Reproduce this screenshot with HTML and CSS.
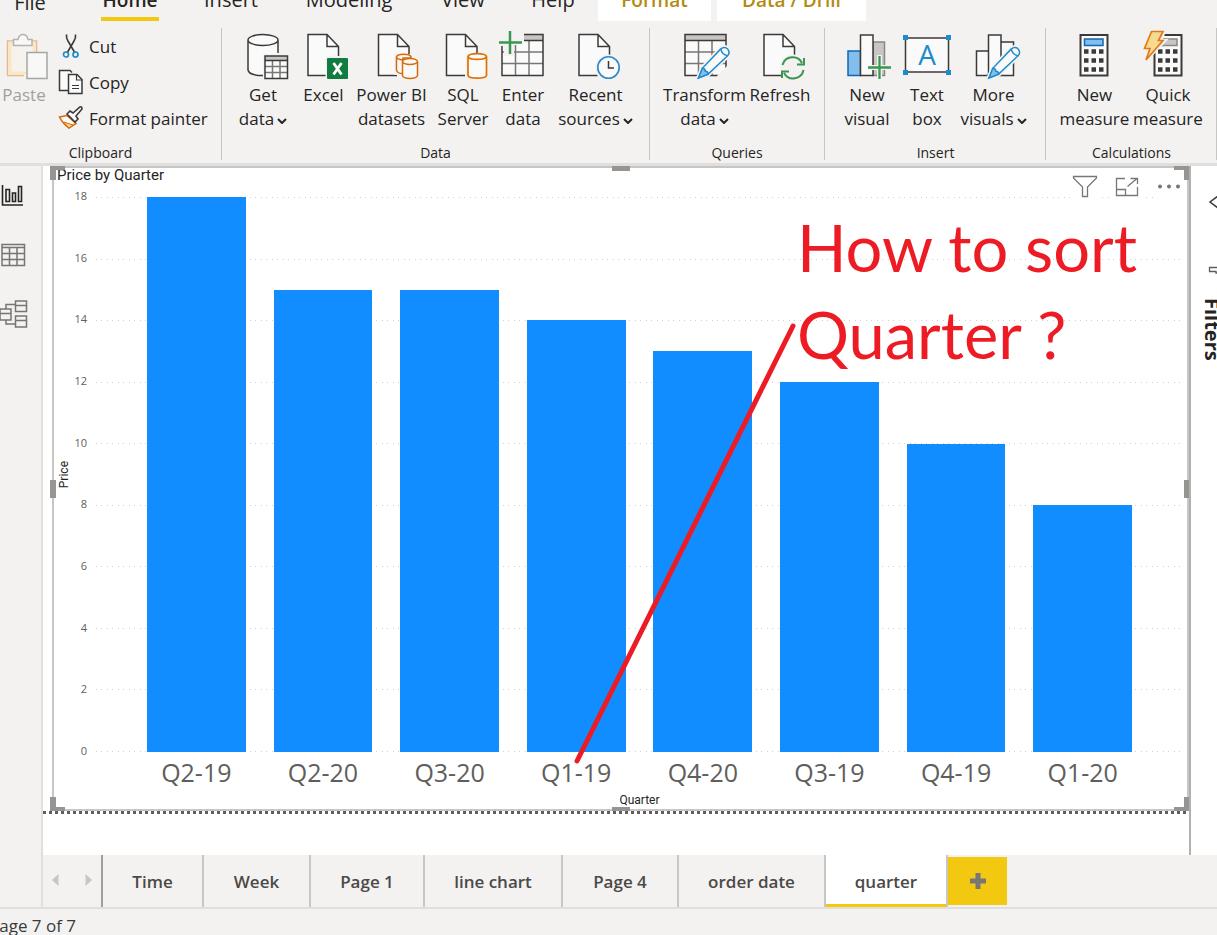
FILE: index.html
```html
<!DOCTYPE html>
<html lang="en">
<head>
<meta charset="utf-8">
<title>Price by Quarter</title>
<link rel="stylesheet" href="styles.css">
</head>
<body>
<svg class="defs" aria-hidden="true">
  <symbol id="doc" viewBox="-1 -1 34 44" overflow="visible">
    <path d="M0.5 0.5H19.5L31 12V41.500H0.500Z" fill="#fafafa"/>
    <path d="M31 22V12.500L19.500 .5H.5V41.500H19M19.500 .5V12.500H31" fill="none" stroke="#3b3a39" stroke-width="1.5"/>
  </symbol>
  <symbol id="pencil" viewBox="0 0 34 34" overflow="visible">
    <path d="M1 33L5 23L24 3Q28 0 31 3Q34 7 31 10L11 29Z" fill="#fff" stroke="#f3f2f1" stroke-width="5"/>
    <path d="M1 33L5 23L24 3Q28 0 31 3Q34 7 31 10L11 29Z" fill="#fafafa" stroke="#1e8bcd" stroke-width="1.500"/>
    <path d="M1 33L5 23Q8 23 8 26Q11 26 11 29Z" fill="#83beec" stroke="#1e8bcd" stroke-width="1.500"/>
    <path d="M24 3Q25 9 31 10" fill="none" stroke="#1e8bcd" stroke-width="1.500"/>
  </symbol>
  <symbol id="grid" viewBox="0 0 43 43" overflow="visible">
    <rect x="1" y="1" width="41" height="41" fill="#fafafa"/>
    <rect x="1" y="1" width="41" height="6" fill="#c8c6c4"/>
    <path d="M14.500 7V42M28 7V42M1 18.500H42M1 30H42" stroke="#797775" stroke-width="1.500" fill="none"/>
    <path d="M1 7H42M1 1H42V42H1Z" stroke="#3b3a39" stroke-width="1.500" fill="none"/>
  </symbol>
  <symbol id="chev" viewBox="0 0 10 6" overflow="visible">
    <path d="M1 1L5 5L9 1" fill="none" stroke="#252423" stroke-width="2"/>
  </symbol>
</svg>

<div class="app">
  <nav class="menu">
    <button class="menu-item file">File</button>
    <button class="menu-item active">Home</button>
    <button class="menu-item">Insert</button>
    <button class="menu-item">Modeling</button>
    <button class="menu-item">View</button>
    <button class="menu-item help">Help</button>
    <button class="menu-item context">Format</button>
    <button class="menu-item context">Data / Drill</button>
  </nav>

  <div class="ribbon">
    <section class="group clipboard">
      <div class="tools">
        <button class="tool paste">
          <svg class="icon" viewBox="0 0 56 50">
            <path d="M12 12H39V46H12Z" fill="#f6f3ef"/>
            <path d="M19 11H11.500V45.500H28M35 11H40.500V22" fill="none" stroke="#e5b98f" stroke-width="1.500"/>
            <path d="M19 13H14V43H30M35 13H38V22" fill="none" stroke="#fbe6c4" stroke-width="3"/>
            <path d="M17.500 15.500V9.500H22Q23 4.500 27 4.500T32 9.500H36V15.500Z" fill="#f8f8f7" stroke="#b5b3b1" stroke-width="1.500"/>
            <rect x="31" y="22.500" width="20" height="26" fill="#f8f8f7" stroke="#a8a6a4" stroke-width="1.500"/>
          </svg>
          <span>Paste</span>
        </button>
        <div class="stack">
          <button class="row-tool">
            <svg class="mini" viewBox="0 0 26 26"><path d="M8.500 1.500Q8 5 10 8L17 20M17.500 1.500Q18 5 16 8L9 20" fill="none" stroke="#3b3a39" stroke-width="1.600"/><circle cx="8" cy="21.500" r="2.500" fill="none" stroke="#1e8bcd" stroke-width="1.700"/><circle cx="17.500" cy="21.500" r="2.500" fill="none" stroke="#1e8bcd" stroke-width="1.700"/></svg>
            <span>Cut</span>
          </button>
          <button class="row-tool">
            <svg class="mini" viewBox="0 0 26 26"><path d="M10.500 21.500H1.500V1.500H12L14 3.500" fill="#fafafa" stroke="#3b3a39" stroke-width="1.500"/><path d="M10.500 5.500H19L24 10.500V24.500H10.500Z" fill="#fafafa" stroke="#3b3a39" stroke-width="1.500"/><path d="M18.500 5.500V11H24M14 16.500H21M14 19.500H21" fill="none" stroke="#3b3a39" stroke-width="1.200"/></svg>
            <span>Copy</span>
          </button>
          <button class="row-tool">
            <svg class="mini" viewBox="0 0 26 26"><path d="M1.500 12L9 10.500L18 18.500L11 23Q5 19 1.500 12Z" fill="#fafafa" stroke="#d86a0a" stroke-width="1.600"/><path d="M5.500 17L15 20L11 23Z" fill="#f9d58d" stroke="#d86a0a"/><path d="M9 9L12 6L15 8L22 2Q24 1 24 4L18 11L20 14L17 17Z" fill="#fafafa" stroke="#3b3a39" stroke-width="1.600"/></svg>
            <span>Format painter</span>
          </button>
        </div>
      </div>
      <h2 class="group-name">Clipboard</h2>
    </section>

    <section class="group data">
      <div class="tools">
        <button class="tool">
          <svg class="icon" viewBox="0 0 56 50">
            <path d="M13 10V41Q14 46 28 46H30V26H43V10Q43 5 28 5T13 10Z" fill="#fafafa"/>
            <path d="M43 23V10M13 10V40Q14 45.500 28 45.500M13 10A15 5.500 0 0 0 43 10A15 5.500 0 0 0 13 10Z" fill="none" stroke="#3b3a39" stroke-width="1.500"/>
            <rect x="28" y="24" width="26" height="26" fill="#f3f2f1"/>
            <rect x="30" y="26" width="22.500" height="22.500" fill="#fafafa"/><rect x="30" y="26" width="22.500" height="4" fill="#c8c6c4"/>
            <path d="M37.500 30.500V48.500M45 30.500V48.500M30 36.500H52.500M30 42.500H52.500" stroke="#797775" stroke-width="1.500"/>
            <path d="M30 26H52.500V48.500H30ZM30 30.500H52.500" fill="none" stroke="#3b3a39" stroke-width="1.500"/>
          </svg>
          <span>Get<br>data<svg class="chev"><use href="#chev"/></svg></span>
        </button>
        <button class="tool">
          <svg class="icon" viewBox="0 0 56 50"><use href="#doc" x="10.500" y="3" width="34" height="44"/><rect x="29.500" y="26" width="24" height="24" fill="#f3f2f1"/><rect x="31" y="28" width="21" height="21" rx="1" fill="#107c41"/><path d="M37.500 33L45.500 44.500M45.500 33L37.500 44.500" stroke="#fff" stroke-width="2.800"/></svg>
          <span>Excel</span>
        </button>
        <button class="tool">
          <svg class="icon" viewBox="0 0 56 50"><use href="#doc" x="13" y="3" width="34" height="44"/>
            <path d="M30 24H48V27H56V50H36V45H30Z" fill="#f3f2f1"/>
            <g fill="#fafafa" stroke="#d86a0a" stroke-width="1.500"><path d="M32.500 27V40Q33 43.500 39 43.500V28H47V27A7.300 3 0 0 0 32.500 27A7.300 3 0 0 0 40 30"/><path d="M38.500 31.500V45.500A7.500 3 0 0 0 53.500 45.500V31.500A7.500 3 0 0 0 38.500 31.500A7.500 3 0 0 0 53.500 31.500"/></g>
          </svg>
          <span>Power BI<br>datasets</span>
        </button>
        <button class="tool">
          <svg class="icon" viewBox="0 0 56 50"><use href="#doc" x="10" y="3" width="34" height="44"/><path d="M30.500 23H54V50H30.500Z" fill="#f3f2f1"/><path d="M33 26.500V45.500A9.300 3 0 0 0 51.500 45.500V26.500A9.300 3.300 0 0 0 33 26.500A9.300 3.300 0 0 0 51.500 26.500" fill="#fafafa" stroke="#e07000" stroke-width="1.700"/></svg>
          <span>SQL<br>Server</span>
        </button>
        <button class="tool">
          <svg class="icon" viewBox="0 0 56 50"><use href="#grid" x="6" y="3.500" width="43" height="43"/><path d="M3 0H20V3H29V12H19V26H9V16H3Z" fill="#f3f2f1"/><path d="M19 12H29V15H19Z" fill="#fafafa"/><path d="M15 1V24M4 12.500H27" stroke="#3a9650" stroke-width="2.500"/></svg>
          <span>Enter<br>data</span>
        </button>
        <button class="tool">
          <svg class="icon" viewBox="0 0 56 50"><use href="#doc" x="9.500" y="3" width="34" height="44"/><circle cx="40.500" cy="37.500" r="13" fill="#f3f2f1"/><circle cx="40.500" cy="37.500" r="10.700" fill="#fafafa" stroke="#2b88c9" stroke-width="1.600"/><path d="M40.500 31V38H46" fill="none" stroke="#3b3a39" stroke-width="1.500"/></svg>
          <span>Recent<br>sources<svg class="chev"><use href="#chev"/></svg></span>
        </button>
      </div>
      <h2 class="group-name">Data</h2>
    </section>

    <section class="group queries">
      <div class="tools">
        <button class="tool">
          <svg class="icon" viewBox="0 0 56 50"><use href="#grid" x="7" y="3.500" width="43" height="43"/><path d="M40 46L52 34V50H40Z" fill="#f3f2f1"/><use href="#pencil" x="20.500" y="16" width="33" height="33"/></svg>
          <span>Transform<br>data<svg class="chev"><use href="#chev"/></svg></span>
        </button>
        <button class="tool">
          <svg class="icon" viewBox="0 0 56 50"><use href="#doc" x="10.500" y="3" width="34" height="44"/><circle cx="41" cy="37.500" r="13" fill="#f3f2f1"/><path d="M30.500 35A10.500 10.500 0 0 1 50 33M51.500 40A10.500 10.500 0 0 1 32 43M52 28V34.500H45M30 48V41.500H37" fill="none" stroke="#3a9650" stroke-width="2"/></svg>
          <span>Refresh</span>
        </button>
      </div>
      <h2 class="group-name">Queries</h2>
    </section>

    <section class="group insert">
      <div class="tools">
        <button class="tool">
          <svg class="icon" viewBox="0 0 56 50"><rect x="9" y="21" width="12.500" height="24.500" fill="#83beec" stroke="#1167b1" stroke-width="1.500"/><rect x="34" y="12" width="11.500" height="33.500" fill="#c8c6c4" stroke="#8a8886" stroke-width="1.500"/><rect x="21.500" y="5" width="12.500" height="40.500" fill="#fafafa" stroke="#3b3a39" stroke-width="1.500"/><path d="M38 25H43V35H54V40H43V50H38V40H29V35H38Z" fill="#f3f2f1"/><path d="M40.500 26V49M29 37.500H52" stroke="#3a9650" stroke-width="2.300"/></svg>
          <span>New<br>visual</span>
        </button>
        <button class="tool">
          <svg class="icon" viewBox="0 0 56 50"><rect x="6.500" y="8" width="43" height="34" fill="#fafafa" stroke="#3b3a39" stroke-width="1.500"/><path d="M4 5H9V10H4ZM47 5H52V10H47ZM4 40H9V45H4ZM47 40H52V45H47Z" fill="#1e8bcd"/><text x="28" y="35" class="glyph-a">A</text></svg>
          <span>Text<br>box</span>
        </button>
        <button class="tool">
          <svg class="icon" viewBox="0 0 56 50"><path d="M10.500 21H22.500V45.500H10.500ZM35 12H47.500V45.500H35ZM22.500 5H35V45.500H22.500Z" fill="#fafafa" stroke="#3b3a39" stroke-width="1.500"/><use href="#pencil" x="22" y="16" width="33" height="33"/></svg>
          <span>More<br>visuals<svg class="chev"><use href="#chev"/></svg></span>
        </button>
      </div>
      <h2 class="group-name">Insert</h2>
    </section>

    <section class="group calc">
      <div class="tools">
        <button class="tool">
          <svg class="icon" viewBox="0 0 56 50"><rect x="13.500" y="5" width="27" height="40.500" fill="#fafafa" stroke="#3b3a39" stroke-width="2"/><rect x="17.500" y="9" width="18.500" height="6.500" fill="#83beec" stroke="#1167b1" stroke-width="1.500"/><path d="M17 21.500H36.500M17 30.500H36.500M17 39.500H36.500" stroke="#3b3a39" stroke-width="4.500" stroke-dasharray="4.500 3"/></svg>
          <span>New<br>measure</span>
        </button>
        <button class="tool">
          <svg class="icon" viewBox="0 0 56 50"><rect x="14.500" y="5" width="27" height="40.500" fill="#fafafa" stroke="#3b3a39" stroke-width="2"/><rect x="18.500" y="9" width="18.500" height="6.500" fill="#c8c6c4" stroke="#8a8886" stroke-width="1.500"/><path d="M18 21.500H37.500M18 30.500H37.500M18 39.500H37.500" stroke="#3b3a39" stroke-width="4.500" stroke-dasharray="4.500 3"/><path d="M11 1H24L20 11H24L5.500 30L9 19H5Z" fill="#f3f2f1" stroke="#f3f2f1" stroke-width="4"/><path d="M11.500 1.500H23L18.500 10.500H23L6 30L10 18.500H4.500Z" fill="#f9d98f" stroke="#e07b1a" stroke-width="1.700"/></svg>
          <span>Quick<br>measure</span>
        </button>
      </div>
      <h2 class="group-name">Calculations</h2>
    </section>
  </div>

  <div class="workspace">
    <nav class="views">
      <button class="view" aria-label="Report view"><svg viewBox="0 0 30 30"><path d="M2.500 4V24H23" fill="none" stroke="#252423" stroke-width="1.600"/><path d="M6 8.500H9.500V20.500H6ZM12.500 12H15.500V20.500H12.500ZM18.500 5.500H21.500V20.500H18.500Z" fill="none" stroke="#252423" stroke-width="1.600"/></svg></button>
      <button class="view" aria-label="Data view"><svg viewBox="0 0 30 30"><path d="M2 4.500H24.500V25.500H2ZM2 7.500H24.500M2 13.500H24.500M2 19.500H24.500M9.500 7.500V25.500M17 7.500V25.500" fill="none" stroke="#777573" stroke-width="1.500"/></svg></button>
      <button class="view" aria-label="Model view"><svg viewBox="0 0 30 30"><path d="M0 10H11V21H0ZM0 14.500H11M15.500 2H26.500V12.500H15.500ZM15.500 6.500H26.500M15.500 17H26.500V28H15.500ZM15.500 21.500H26.500M6 10V5.500H15.500M6 21V25H15.500" fill="none" stroke="#777573" stroke-width="1.500"/></svg></button>
    </nav>

    <div class="center">
      <main class="canvas">
        <figure class="visual">
          <figcaption class="visual-title">Price by Quarter</figcaption>
          <div class="chart">
            <div class="y-title"><span>Price</span></div>
            <div class="y-axis"><span>18</span><span>16</span><span>14</span><span>12</span><span>10</span><span>8</span><span>6</span><span>4</span><span>2</span><span>0</span></div>
            <div class="plot">
              <div class="lines"><i></i><i></i><i></i><i></i><i></i><i></i><i></i><i></i><i></i><i></i></div>
              <div class="bars">
                <div class="bar" style="height:100%"></div>
                <div class="bar" style="height:83.33%"></div>
                <div class="bar" style="height:83.33%"></div>
                <div class="bar" style="height:77.78%"></div>
                <div class="bar" style="height:72.22%"></div>
                <div class="bar" style="height:66.67%"></div>
                <div class="bar" style="height:55.56%"></div>
                <div class="bar" style="height:44.44%"></div>
              </div>
            </div>
            <div class="x-axis"><span>Q2-19</span><span>Q2-20</span><span>Q3-20</span><span>Q1-19</span><span>Q4-20</span><span>Q3-19</span><span>Q4-19</span><span>Q1-20</span></div>
          </div>
          <div class="x-title">Quarter</div>

          <div class="visual-tools">
            <button aria-label="Filters"><svg viewBox="0 0 30 30"><path d="M3.500 4.500H26.500V6L17.500 15V24.500H12.500V15L3.500 6Z" fill="none" stroke="#797775" stroke-width="1.300"/></svg></button>
            <button aria-label="Focus mode"><svg viewBox="0 0 30 30"><path d="M13 6.500H4.500V23.500H25.500V15M4.500 17.500H13.500V23.500M15.500 14.500L25 6.500M18.500 6.500H25.500V12" fill="none" stroke="#797775" stroke-width="1.300"/></svg></button>
            <button aria-label="More options"><svg viewBox="0 0 30 30"><path d="M6 14.500h.01M15 14.500h.01M24 14.500h.01" stroke="#797775" stroke-width="4" stroke-linecap="round"/></svg></button>
          </div>
          <i class="handle tl"></i><i class="handle tr"></i><i class="handle bl"></i><i class="handle br"></i>
          <i class="handle tm"></i><i class="handle bm"></i><i class="handle lm"></i><i class="handle rm"></i>
          <svg class="pointer" viewBox="0 0 224 443"><path d="M220 4L4 439" stroke="#ed1c24" stroke-width="5" stroke-linecap="round"/></svg>
          <p class="note">How to sort<br>Quarter ?</p>
        </figure>
        <div class="page-edge"></div>
      </main>

      <aside class="filters">
        <svg class="collapse" viewBox="0 0 16 20"><path d="M14 1L2 10L14 19" fill="none" stroke="#3b3a39" stroke-width="1.500"/></svg>
        <svg class="funnel" viewBox="0 0 16 8"><path d="M16 1.500H1.500V5.500H8V7H16" fill="none" stroke="#605e5c" stroke-width="1.300"/></svg>
        <h2>Filters</h2>
      </aside>
    </div>

    <nav class="pages">
      <div class="pager">
        <button aria-label="Previous pages"><svg viewBox="0 0 8 14"><path d="M7.500 1V13L1 7Z" fill="#c8c6c4"/></svg></button>
        <button aria-label="Next pages"><svg viewBox="0 0 8 14"><path d="M.5 1V13L7 7Z" fill="#c8c6c4"/></svg></button>
      </div>
      <button class="page">Time</button>
      <button class="page">Week</button>
      <button class="page">Page 1</button>
      <button class="page">line chart</button>
      <button class="page">Page 4</button>
      <button class="page">order date</button>
      <button class="page current">quarter</button>
      <button class="add" aria-label="New page"><svg viewBox="0 0 18 18"><path d="M9 1V17M1 9H17" stroke="#797775" stroke-width="5"/></svg></button>
    </nav>
  </div>
  <footer class="status"><span>Page 7 of 7</span></footer>
</div>
</body>
</html>
```

FILE: styles.css
```css
* { box-sizing: border-box; }

body {
  margin: 0;
  font-family: "Open Sans", "Noto Sans", sans-serif;
  color: #252423;
  background: #f3f2f1;
}

button {
  margin: 0;
  padding: 0;
  border: 0;
  background: none;
  font: inherit;
  color: inherit;
}

h2 { margin: 0; }

.defs { position: absolute; width: 0; height: 0; }

.app {
  display: flex;
  flex-direction: column;
  height: 100vh;
  min-height: 480px;
  overflow: hidden;
}

/* Menu, scrolled partly out of the window */
.menu {
  display: grid;
  grid-template-columns: 60px 140px 62px 174px 54px 108px 119px 149px;
  align-items: end;
  align-content: end;
  height: 21px;
  flex: none;
}

.menu-item {
  height: 36px;
  font-size: 20px;
  line-height: 30px;
  white-space: nowrap;
  padding-bottom: 6px;
}

.menu-item.file { padding-bottom: 0; }
.menu-item.help { padding-left: 18px; }

.menu-item.active {
  justify-self: center;
  font-size: 19px;
  font-weight: 600;
  width: 58px;
  border-bottom: 4px solid #f2c811;
  padding-bottom: 2px;
}

.menu-item.context {
  background: #fff;
  color: #b08c12;
  font-size: 19px;
  font-weight: 600;
}

.menu-item.context:nth-child(7) { margin-right: 6px; }

/* Ribbon */
.ribbon {
  display: grid;
  grid-template-columns: 222px 428px 175px 221px 171px;
  flex: none;
  padding: 7px 0 3px;
  border-bottom: 3px solid #e1dfdd;
}

.group {
  display: flex;
  flex-direction: column;
  height: 132px;
  padding-left: 11px;
  border-right: 1px solid #c8c6c4;
}

.tools { display: grid; flex: 1; align-items: start; }

.insert, .calc { padding-left: 12px; }
.clipboard { padding: 0; }
.clipboard .tools { grid-template-columns: 52px 1fr; }
.data .tools { grid-template-columns: 60px 61px 75px 68px 52px 93px; }
.queries .tools { grid-template-columns: 87px 64px; }
.insert .tools { grid-template-columns: 60px 60px 73px; }
.calc .tools { grid-template-columns: 73px 74px; }

.tool {
  display: flex;
  flex-direction: column;
  align-items: center;
  padding-top: 2px;
  font-size: 17px;
  line-height: 24px;
  white-space: nowrap;
}

.tool span { margin-top: 3px; }

.icon { width: 56px; height: 50px; }

.glyph-a {
  font-family: "Open Sans", sans-serif;
  font-size: 28px;
  text-anchor: middle;
  fill: #1e8bcd;
}

.chev { width: 10px; height: 6px; margin-left: 3px; vertical-align: 1px; }

.paste { color: #a19f9d; padding-right: 4px; }

.stack { display: flex; flex-direction: column; padding-left: 6px; }

.row-tool {
  display: flex;
  align-items: center;
  gap: 5px;
  height: 36px;
  font-size: 17px;
}

.mini { width: 26px; height: 26px; }

.group-name {
  font-size: 14px;
  font-weight: 400;
  line-height: 14px;
  text-align: center;
}

.group .group-name { padding-right: 11px; }
.clipboard .group-name { padding-right: 20px; }

/* Workspace */
.workspace {
  flex: 1;
  min-height: 0;
  display: grid;
  grid-template-columns: 43px 1fr;
  grid-template-rows: 1fr 52px;
  border-bottom: 2px solid #e1dfdd;
}

.views {
  grid-row: 1 / 3;
  display: flex;
  flex-direction: column;
  gap: 29px;
  padding-top: 15px;
  border-right: 2px solid #e1dfdd;
}

.view { height: 30px; text-align: left; }
.view svg { display: block; width: 30px; height: 30px; }

.center { display: grid; grid-template-columns: 1fr 28px; min-height: 0; background: #fff; }

.canvas {
  display: flex;
  flex-direction: column;
  min-height: 0;
  padding-bottom: 41px;
}

.visual {
  position: relative;
  flex: 1;
  min-height: 0;
  margin: 0 0 0 9px;
  border: 2px solid #c8c6c4;
  display: flex;
  flex-direction: column;
}

.visual-title {
  padding-left: 3px;
  font: 15px/15px Roboto, sans-serif;
}

.chart {
  flex: 1;
  min-height: 0;
  display: grid;
  grid-template-columns: 20px 13px 1fr;
  grid-template-rows: 1fr 41px;
  padding: 14px 3px 0 0;
}

.y-title {
  display: flex;
  align-items: center;
  justify-content: center;
  font: 12px/14px Roboto, sans-serif;
}

.y-title span { writing-mode: vertical-rl; transform: rotate(180deg); }

.y-axis {
  display: flex;
  flex-direction: column;
  justify-content: space-between;
  align-items: flex-end;
  margin: -9px 0 -7px;
  font-size: 11px;
  line-height: 16px;
  color: #605e5c;
}

.plot { display: grid; margin-left: 9px; }

.lines, .bars { grid-area: 1 / 1; }

.lines { display: flex; flex-direction: column; justify-content: space-between; }

.lines i {
  height: 1px;
  background: repeating-linear-gradient(to right, #d2d0ce 0 1px, transparent 1px 5px, #d2d0ce 5px 6px, transparent 6px 11px);
}

.bars, .x-axis {
  display: grid;
  grid-template-columns: repeat(8, 1fr);
  padding: 0 38px 0 37px;
}

.bars { align-items: end; }

.bar { background: #118dff; margin: 0 11%; }

.x-axis {
  grid-column: 3;
  margin-left: 9px;
  padding-top: 6px;
  font-size: 25px;
  line-height: 28px;
  text-align: center;
  color: #605e5c;
}

.x-title {
  padding: 0 0 2px 38px;
  font: 12px/14px Roboto, sans-serif;
  text-align: center;
}

.visual-tools { position: absolute; top: 4px; right: 3px; display: flex; gap: 12px; }
.visual-tools button { width: 30px; height: 30px; background: #fff; }
.visual-tools svg { display: block; width: 30px; height: 30px; }

/* Selection handles on the frame */
.handle { position: absolute; border: 0 solid #979593; width: 15px; height: 14px; }
.tl { left: -4px; top: -2px; border-top-width: 4px; border-left-width: 6px; }
.tr { right: -2px; top: -2px; border-top-width: 4px; border-right-width: 5px; }
.bl { left: -4px; bottom: -2px; border-bottom-width: 4px; border-left-width: 6px; }
.br { right: -2px; bottom: -2px; border-bottom-width: 4px; border-right-width: 5px; }
.tm, .bm { left: calc(50% - 9px); width: 18px; height: 5px; background: #979593; }
.tm { top: -2px; }
.bm { bottom: -2px; height: 4px; }
.lm, .rm { top: calc(50% - 9px); width: 6px; height: 18px; background: #979593; }
.lm { left: -4px; }
.rm { right: -2px; width: 5px; }

/* Annotation drawn over the chart */
.pointer { position: absolute; left: 519px; top: 154px; width: 224px; height: 443px; }

.note {
  position: absolute;
  left: 743px;
  top: 36px;
  margin: 0;
  font: 65px/87px Lato, sans-serif;
  color: #ed1c24;
  white-space: nowrap;
}

.page-edge {
  height: 3px;
  background: repeating-linear-gradient(to right, #605e5c 0 3px, transparent 3px 6px);
}

.filters {
  border-left: 2px solid #b3b0ad;
  padding: 26px 0 0 17px;
  overflow: hidden;
  min-height: 0;
}

.filters svg { display: block; }
.collapse { width: 16px; height: 20px; }
.funnel { width: 16px; height: 8px; margin-top: 54px; }

.filters h2 {
  writing-mode: vertical-rl;
  margin: 24px 0 0 -9px;
  font-size: 20px;
  line-height: 26px;
  font-weight: 700;
}

/* Page tabs */
.pages {
  display: grid;
  grid-template-columns: 60px 101px 107px 114px 138px 116px 147px 122px 59px;
  overflow: hidden;
}

.pager {
  display: flex;
  justify-content: space-between;
  padding: 0 8px;
  border-right: 2px solid #a19f9d;
}

.pager svg { width: 8px; height: 14px; }

.page {
  border-right: 2px solid #c8c6c4;
  font-size: 17px;
  font-weight: 600;
  color: #4b4947;
  white-space: nowrap;
}

.current { background: #fff; box-shadow: inset 0 -3px #f2c811; }

.add { display: flex; align-items: center; justify-content: center; margin: 2px 0; background: #f2c811; }
.add svg { width: 18px; height: 18px; }

.status {
  flex: none;
  height: 26px;
  overflow: hidden;
  font-size: 17px;
  line-height: 34px;
  white-space: nowrap;
  color: #3b3a39;
}

.status span { margin-left: -11px; }
```
